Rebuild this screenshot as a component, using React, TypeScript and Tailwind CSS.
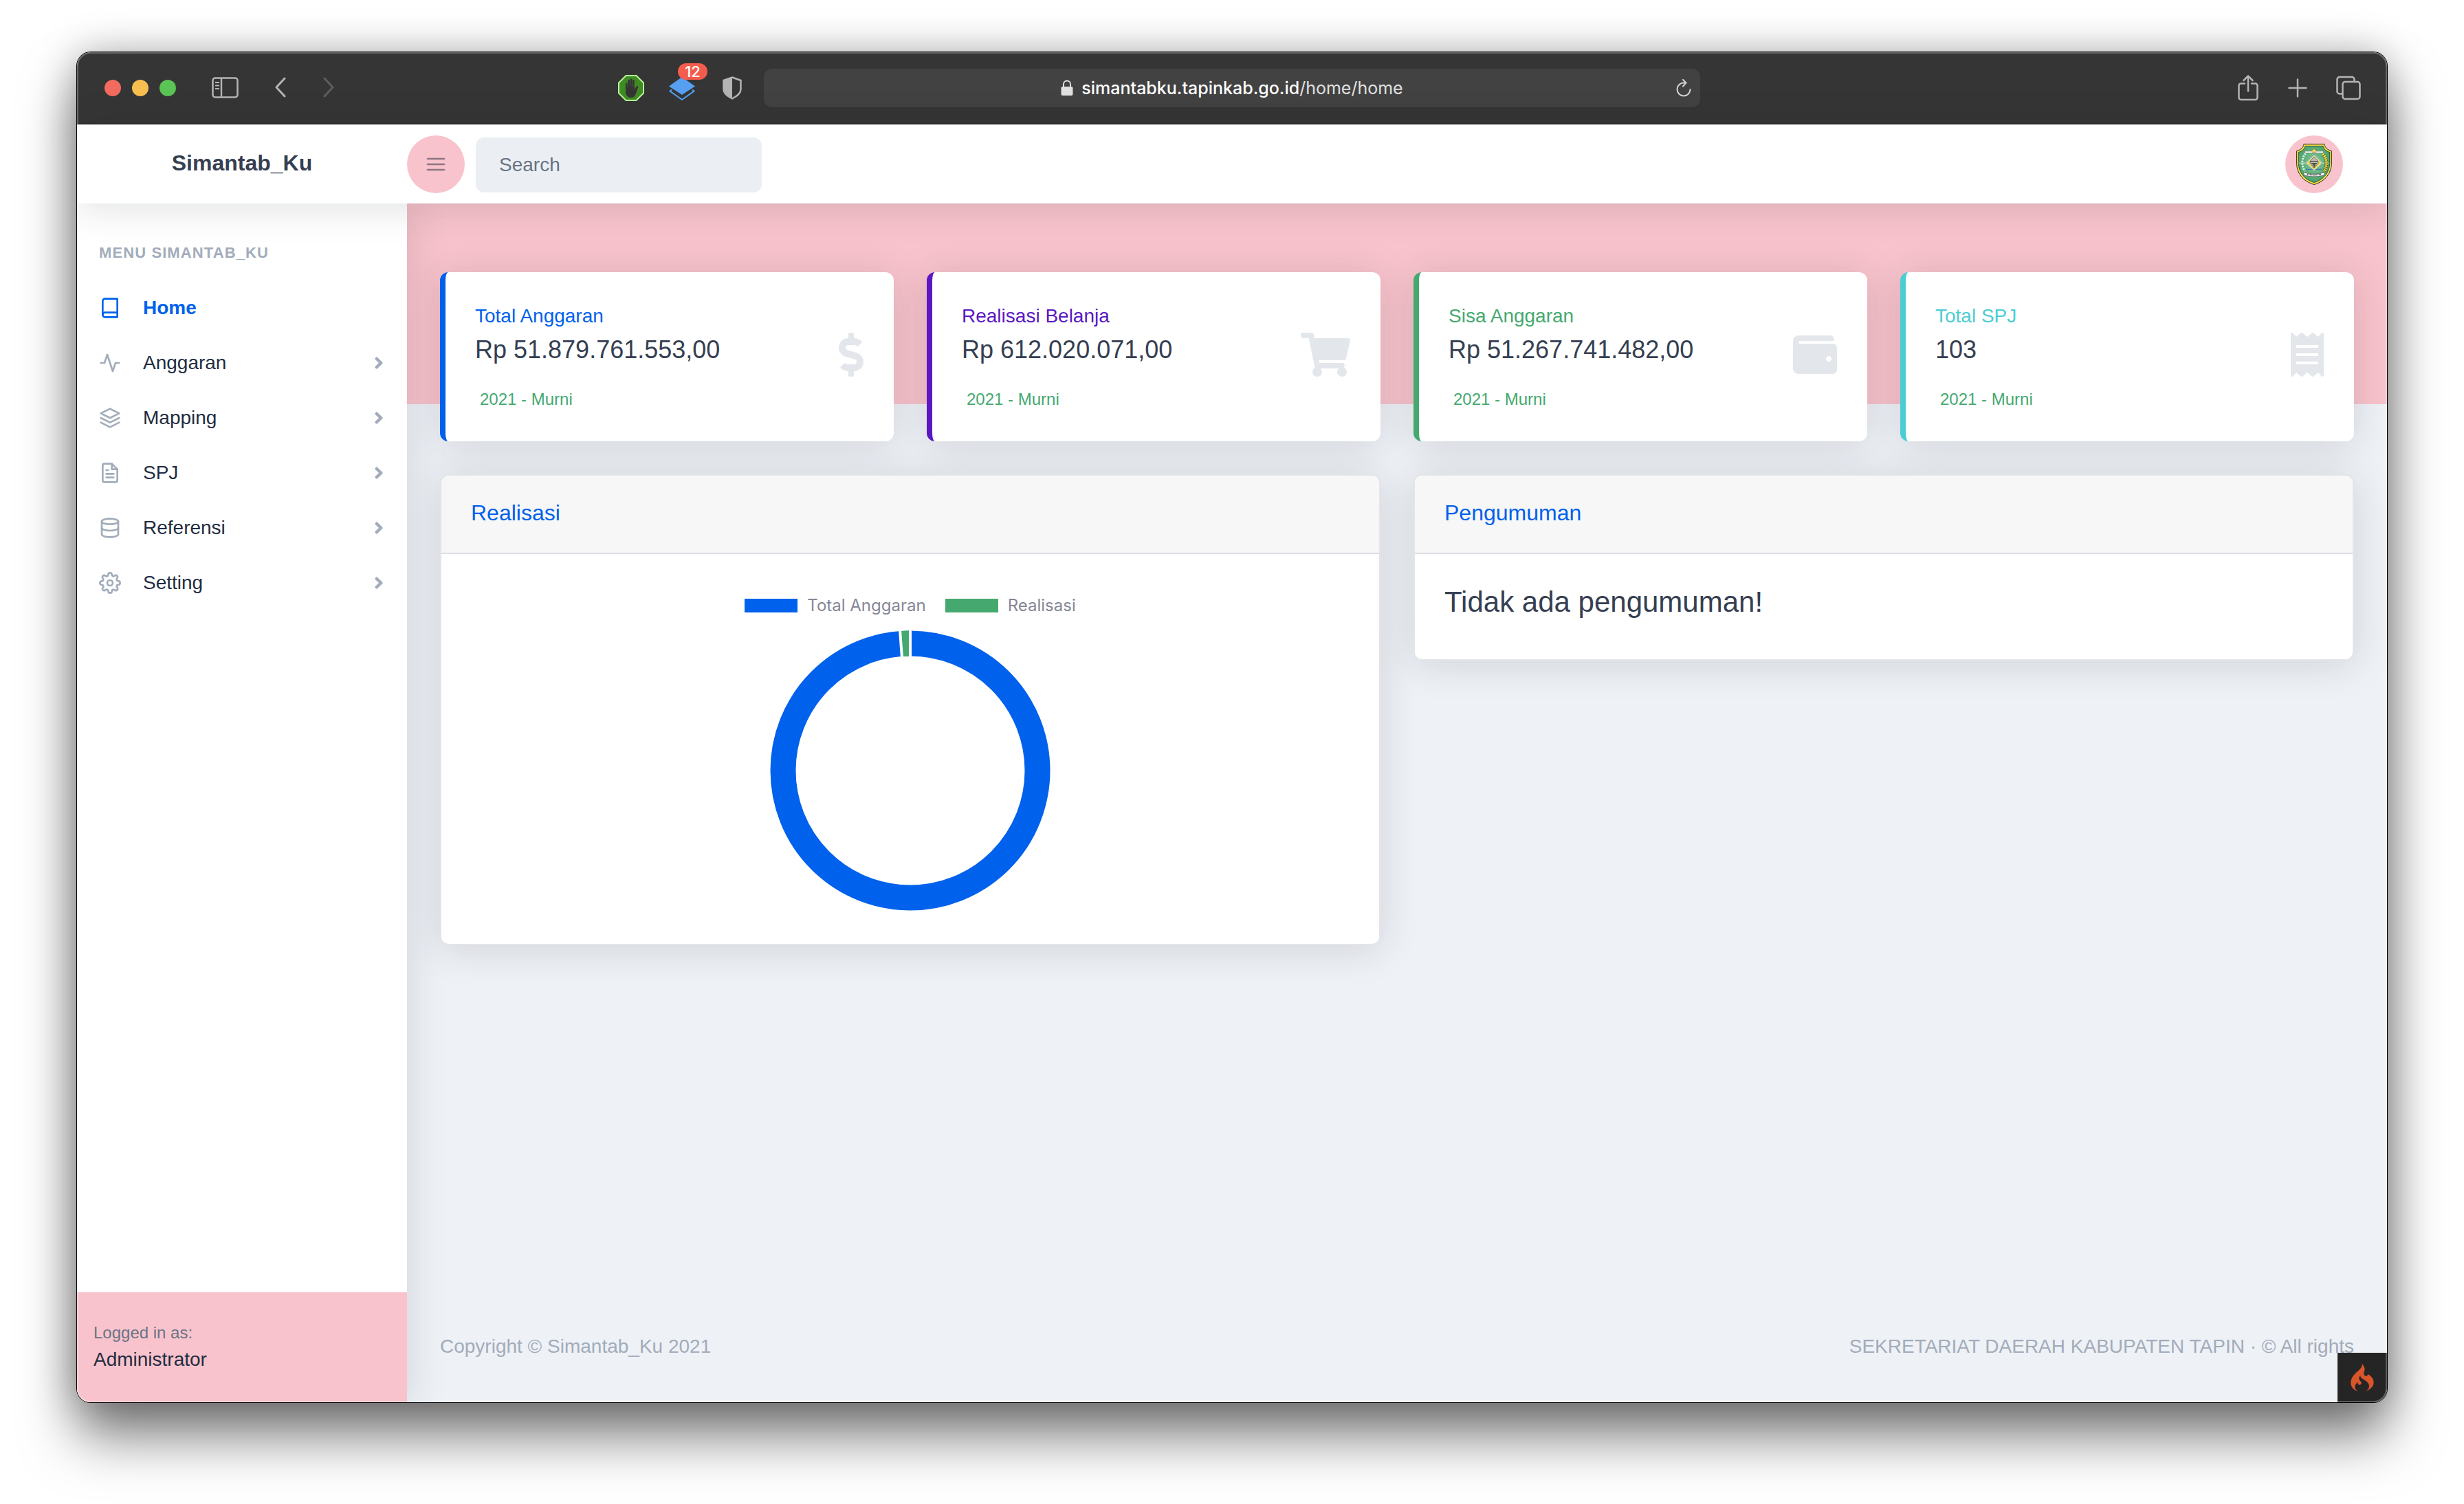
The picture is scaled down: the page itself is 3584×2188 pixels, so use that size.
import React from "react";
import {
  FiActivity,
  FiBook,
  FiDatabase,
  FiFileText,
  FiLayers,
  FiMenu,
  FiSettings,
} from "react-icons/fi";
import {
  FaAngleRight,
  FaDollarSign,
  FaReceipt,
  FaShoppingCart,
  FaWallet,
} from "react-icons/fa";
import { SiCodeigniter } from "react-icons/si";

function BrowserBar() {
  return (
    <div className="grid h-[104px] grid-cols-[1fr_1362px_1fr] items-center bg-[#353535] text-[#b4b4b4]">
      <div className="flex items-center pl-10 pr-8">
        <div className="flex gap-4">
          <button aria-label="Close window" className="size-6 rounded-full bg-[#f26b5f]" />
          <button aria-label="Minimize window" className="size-6 rounded-full bg-[#f8be4f]" />
          <button aria-label="Zoom window" className="size-6 rounded-full bg-[#5ac454]" />
        </div>
        <button aria-label="Show sidebar" className="ml-[52px]">
          <svg className="h-8 w-10" viewBox="0 0 40 32" fill="none" stroke="currentColor" strokeWidth="2.5">
            <rect x="1.5" y="1.5" width="36" height="28" rx="3.5" />
            <path d="M14 1.5v28" />
            <path d="M5 8h6M5 12.500h6M5 17h6" strokeWidth="2" />
          </svg>
        </button>
        <button aria-label="Back" className="ml-[50px]">
          <svg className="h-8 w-5" viewBox="0 0 20 32" fill="none" stroke="currentColor" strokeWidth="3" strokeLinecap="round" strokeLinejoin="round">
            <path d="M16 2L4 15l12 13" />
          </svg>
        </button>
        <button aria-label="Forward" className="ml-[50px] text-[#5e5e5e]">
          <svg className="h-8 w-5" viewBox="0 0 20 32" fill="none" stroke="currentColor" strokeWidth="3" strokeLinecap="round" strokeLinejoin="round">
            <path d="M4 2l12 13L4 28" />
          </svg>
        </button>
        <button aria-label="Content blocker" className="ml-auto">
          <svg className="size-[38px]" viewBox="0 0 38 38">
            <path d="M11.500 1h15L37 11.500v15L26.500 37h-15L1 26.500v-15z" fill="#3f8a23" stroke="#b5f59a" strokeWidth="2" />
            <path
              d="M11 25V13a1.300 1.300 0 0 1 2.600 0v5h.6V8.500a1.400 1.400 0 0 1 2.800 0V17h.6V7a1.400 1.400 0 0 1 2.800 0v10h.6V8.500a1.400 1.400 0 0 1 2.800 0V21l3-4.500c1-1.200 3-.3 2.400 1.300-1.600 4-2.400 8.400-4.300 11.700-2.300 4.500-9.300 4.700-12 .8C11.600 28.600 11 27 11 25z"
              fill="#353535"
            />
          </svg>
        </button>
        <button aria-label="Tab stack, 12 open" className="relative ml-9">
          <svg className="size-[38px]" viewBox="0 0 38 38">
            <path d="M19 3l19 13.500L19 29 0 16.500z" fill="#579ff0" />
            <path d="M4 21.500L1.500 23.500 19 36l17.500-12.500-2.500-2" fill="none" stroke="#579ff0" strokeWidth="2" />
          </svg>
          <span className="absolute -top-[17px] left-[13px] flex h-6 w-[43px] items-center justify-center rounded-full bg-[#f45c4d] font-[Inter,sans-serif] text-[22px] leading-none font-medium text-white">
            12
          </span>
        </button>
        <button aria-label="Privacy report" className="ml-10">
          <svg className="h-[34px] w-7" viewBox="0 0 28 34">
            <path d="M14 1.500L26.500 6v13c0 6-5.500 10-12.500 13.500C7 29 1.500 25 1.500 19V6z" fill="none" stroke="currentColor" strokeWidth="2.500" />
            <path d="M14 1.500v31C7 29 1.500 25 1.500 19V6z" fill="currentColor" />
          </svg>
        </button>
      </div>

      <div className="flex h-14 items-center rounded-xl bg-[#424242] pr-3 pl-9">
        <div className="flex flex-1 items-center justify-center gap-3 font-[Inter,sans-serif] text-[25px] leading-8 text-[#e0e0e0]">
          <svg className="h-6 w-[18px]" viewBox="0 0 18 24" aria-hidden="true">
            <rect x="0.500" y="10" width="17" height="13" rx="2" fill="currentColor" />
            <path d="M4 11V6.500a5 5 0 0 1 10 0V11" fill="none" stroke="currentColor" strokeWidth="2" />
          </svg>
          <span>
            <span className="font-medium text-white">simantabku.tapinkab.go.id</span>/home/home
          </span>
        </div>
        <button aria-label="Reload" className="text-[#d4d4d4]">
          <svg className="h-[26px] w-6" viewBox="0 0 24 26" fill="none" stroke="currentColor" strokeWidth="2" strokeLinecap="round" strokeLinejoin="round">
            <path d="M15 5.500H12A9.500 9.500 0 1 0 21.500 15" />
            <path d="M11 1l4.500 4.500L11 10.500" />
          </svg>
        </button>
      </div>

      <div className="flex items-center justify-end gap-[42px] pr-[38px]">
        <button aria-label="Share">
          <svg className="h-[38px] w-8" viewBox="0 0 32 38" fill="none" stroke="currentColor" strokeWidth="2.500" strokeLinecap="round" strokeLinejoin="round">
            <path d="M11 12.500H5.500a3 3 0 0 0-3 3V33a3 3 0 0 0 3 3h21a3 3 0 0 0 3-3V15.500a3 3 0 0 0-3-3H21" />
            <path d="M16 23.500V2M9.500 8L16 1.500 22.500 8" />
          </svg>
        </button>
        <button aria-label="New tab">
          <svg className="size-7" viewBox="0 0 28 28" fill="none" stroke="currentColor" strokeWidth="2.500" strokeLinecap="round">
            <path d="M14 1.500v25M1.500 14h25" />
          </svg>
        </button>
        <button aria-label="Tab overview">
          <svg className="size-9" viewBox="0 0 36 36" fill="none" stroke="currentColor" strokeWidth="2.500" strokeLinejoin="round">
            <rect x="9.500" y="9" width="25" height="25" rx="3.500" />
            <path d="M9.500 26.500H5A3.500 3.500 0 0 1 1.500 23V5.500A3.500 3.500 0 0 1 5 2h18a3.500 3.500 0 0 1 3.500 3.500V9" />
          </svg>
        </button>
      </div>
    </div>
  );
}

function Emblem() {
  return (
    <svg className="h-[60px] w-[52px]" viewBox="0 0 52 60" aria-hidden="true">
      <defs>
        <radialGradient id="emblem-field" cx="0.5" cy="0.45" r="0.6">
          <stop offset="0" stopColor="#8cc79f" />
          <stop offset="1" stopColor="#3f9f62" />
        </radialGradient>
      </defs>
      <path
        d="M11 .8h30c.5 4.500 4.500 8.700 10.400 9.700V28c0 15-9.400 27-25.400 31.500C10 55 .6 43 .6 28V10.500C6.500 9.500 10.500 5.300 11 .8z"
        fill="#f4e04d"
        stroke="#2b2b20"
        strokeWidth="1"
      />
      <path
        d="M13 3.500h26c1 4.500 4.800 7.800 9.700 9V28c0 13-8.200 24.400-22.700 28.500C11.500 52.400 3.300 41 3.300 28V12.500c4.900-1.200 8.700-4.500 9.700-9z"
        fill="url(#emblem-field)"
        stroke="#2b2b20"
        strokeWidth="0.800"
      />
      <path d="M3.500 28.200h45" stroke="#dfe9e2" strokeWidth="0.800" />
      <path d="M12.500 11h27v2.600h-27z" fill="#fff" stroke="#555" strokeWidth="0.500" />
      <path d="M26 6l1.100 2.900 3.100.1-2.500 1.900.9 3-2.600-1.700-2.600 1.700.9-3-2.500-1.900 3.100-.1z" fill="#f6e24b" stroke="#6b6420" strokeWidth="0.400" />
      <path d="M13.500 14.500C8.500 20 6.500 31 12.500 40" fill="none" stroke="#e9f2ec" strokeWidth="3" strokeDasharray="2 1.800" />
      <path d="M38.500 15C45.500 21 45.500 33 40 40.500" fill="none" stroke="#3c4a1c" strokeWidth="4.600" />
      <path d="M38.500 15C45.500 21 45.500 33 40 40.500" fill="none" stroke="#efdc45" strokeWidth="3.800" strokeDasharray="2.200 .8" />
      <path d="M14 37.300h24" stroke="#2f6fae" strokeWidth="1" />
      <path d="M26 17l11 11-11 10.500L15 28z" fill="#f1dc38" stroke="#fff" strokeWidth="1.200" />
      <path d="M26 17l11 11-11 10.500L15 28z" fill="none" stroke="#444" strokeWidth="0.400" />
      <path d="M26 19l6 6.500v3l-6 7-6-7v-3z" fill="#b9b9b4" stroke="#444" strokeWidth="0.600" />
      <path d="M20 25.500h12M22 28.500h8M23.500 31h5M26 28v7" stroke="#333" strokeWidth="1.100" />
      <path d="M10.500 42l4 .8c7.500 2 15.500 2 23 0l4-.8-1.300 4.200-3 .4c-7.400 1.600-15 1.600-22.400 0l-3-.4z" fill="#fff" stroke="#444" strokeWidth="0.600" />
      <path d="M16 44.600c6.700 1.400 13.300 1.400 20 0" fill="none" stroke="#333" strokeWidth="1.500" strokeDasharray="1.200 .7" />
    </svg>
  );
}

function TopNav() {
  return (
    <header className="relative z-20 flex h-[116px] items-center border-t border-black bg-white shadow-[0_5px_56px_0_rgba(33,40,50,0.15)]">
      <a href="#" className="w-[480px] shrink-0 pb-1 text-center text-[32px] leading-[48px] font-bold text-[#363f52]">
        Simantab_Ku
      </a>
      <button aria-label="Toggle sidebar" className="flex size-[84px] items-center justify-center rounded-full bg-[#f8c3cc] text-[#8d7684]">
        <FiMenu className="size-8" />
      </button>
      <input
        type="search"
        aria-label="Search"
        placeholder="Search"
        className="mt-0.5 ml-4 h-20 w-[416px] rounded-xl bg-[#ebeff4] px-[34px] text-[28px] text-[#363f52] outline-none placeholder:text-[#687281] placeholder:opacity-100"
      />
      <button aria-label="Account" className="mr-16 ml-auto flex size-[84px] items-center justify-center rounded-full bg-[#f8c3cc]">
        <Emblem />
      </button>
    </header>
  );
}

const menu = [
  { label: "Home", icon: FiBook, active: true },
  { label: "Anggaran", icon: FiActivity },
  { label: "Mapping", icon: FiLayers },
  { label: "SPJ", icon: FiFileText },
  { label: "Referensi", icon: FiDatabase },
  { label: "Setting", icon: FiSettings },
];

function SideNav() {
  return (
    <aside className="relative z-10 flex w-[480px] shrink-0 flex-col bg-white shadow-[0_5px_56px_0_rgba(33,40,50,0.15)]">
      <h2 className="mt-14 px-8 text-[22px] leading-8 font-bold tracking-wider text-[#a2acba] uppercase">
        Menu Simantab_Ku
      </h2>
      <nav className="mt-6 flex flex-col">
        {menu.map(({ label, icon: Icon, active }) => (
          <a
            key={label}
            href="#"
            className={
              active
                ? "flex h-20 items-center px-8 text-[28px] font-bold text-[#0061ec]"
                : "flex h-20 items-center px-8 text-[28px] text-[#1f2d41]"
            }
          >
            <Icon className={active ? "size-8" : "size-8 text-[#a2acba]"} />
            <span className="ml-8 leading-[42px]">{label}</span>
            {!active && <FaAngleRight className="ml-auto h-7 w-[18px] text-[#a2acba]" />}
          </a>
        ))}
      </nav>
      <div className="mt-auto flex h-40 flex-col justify-center bg-[#f8c3cc] px-6">
        <div className="text-[24px] leading-9 text-[#6a7485]">Logged in as:</div>
        <div className="text-[28px] leading-[42px] text-[#1f2d41]">Administrator</div>
      </div>
    </aside>
  );
}

const stats = [
  { label: "Total Anggaran", value: "Rp 51.879.761.553,00", icon: FaDollarSign, border: "border-[#0061ec]", text: "text-[#0061ec]", size: "h-16 w-9" },
  { label: "Realisasi Belanja", value: "Rp 612.020.071,00", icon: FaShoppingCart, border: "border-[#5a18c2]", text: "text-[#5a18c2]", size: "h-16 w-[72px]" },
  { label: "Sisa Anggaran", value: "Rp 51.267.741.482,00", icon: FaWallet, border: "border-[#45a96f]", text: "text-[#45a96f]", size: "size-16" },
  { label: "Total SPJ", value: "103", icon: FaReceipt, border: "border-[#4ccdd3]", text: "text-[#4ccdd3]", size: "h-16 w-12" },
];

function StatCards() {
  return (
    <div className="grid grid-cols-4 gap-12">
      {stats.map(({ label, value, icon: Icon, border, text, size }) => (
        <section
          key={label}
          className={`flex items-center justify-between rounded-xl border-l-8 bg-white py-[43px] pr-11 pl-[43px] shadow-[0_5px_56px_0_rgba(33,40,50,0.15)] ${border}`}
        >
          <div>
            <h3 className={`text-[28px] leading-[42px] ${text}`}>{label}</h3>
            <p className="text-[36px] leading-[56px] text-[#363f52]">{value}</p>
            <p className="mt-[26px] pl-[7px] text-[24px] leading-9 text-[#45a96f]">2021 - Murni</p>
          </div>
          <Icon className={`mb-1.5 text-[#e3e7ec] ${size}`} />
        </section>
      ))}
    </div>
  );
}

function Panel({ title, children }: { title: string; children: React.ReactNode }) {
  return (
    <section className="overflow-clip rounded-xl border-2 border-[#e3e5e8] bg-white shadow-[0_5px_56px_0_rgba(33,40,50,0.15)]">
      <h2 className="border-b-2 border-[#dddfe5] bg-[#f7f7f7] px-[43px] pt-[30px] pb-[34px] text-[32px] leading-[48px] text-[#0061ec]">
        {title}
      </h2>
      {children}
    </section>
  );
}

const spent = 612020071;
const budget = 51879761553;

function BudgetDonut() {
  const angle = (2 * Math.PI * spent) / (spent + budget);
  const at = (r: number) => `${204 - r * Math.sin(angle)} ${204 - r * Math.cos(angle)}`;
  return (
    <svg className="size-[408px]" viewBox="0 0 408 408" role="img" aria-label="Realisasi anggaran">
      <circle cx="204" cy="204" r="185" fill="none" stroke="#0061ec" strokeWidth="37" />
      <path d={`M${at(185)}A185 185 0 0 1 204 19`} fill="none" stroke="#45a96f" strokeWidth="37" />
      <path d={`M204 0V40M${at(205)}L${at(164)}`} stroke="#fff" strokeWidth="4" />
    </svg>
  );
}

function Dashboard() {
  return (
    <main className="relative flex min-w-0 flex-1 flex-col bg-[linear-gradient(to_bottom,#f8c3cc_292px,#eef1f6_292px)] px-12 pt-[100px]">
      <StatCards />
      <div className="mt-12 grid grid-cols-2 items-start gap-12">
        <Panel title="Realisasi">
          <div className="flex flex-col items-center pt-[63px] pb-12">
            <div className="flex h-6 items-center font-[Inter,sans-serif] text-[24px] leading-6 text-[#858796]">
              <span className="h-5 w-[77px] bg-[#0061ec]" />
              <span className="ml-3.5">Total Anggaran</span>
              <span className="ml-7 h-5 w-[77px] bg-[#45a96f]" />
              <span className="ml-3.5">Realisasi</span>
            </div>
            <div className="mt-6">
              <BudgetDonut />
            </div>
          </div>
        </Panel>
        <Panel title="Pengumuman">
          <p className="px-[43px] pt-[45px] pb-[58px] text-[42px] leading-[50px] text-[#363f52]">
            Tidak ada pengumuman!
          </p>
        </Panel>
      </div>
      <footer className="mt-auto flex justify-between pb-[60px] text-[28px] leading-[42px] text-[#a2acba]">
        <span>Copyright © Simantab_Ku 2021</span>
        <span>SEKRETARIAT DAERAH KABUPATEN TAPIN · © All rights</span>
      </footer>
      <button aria-label="Debug toolbar" className="absolute right-0 bottom-0 flex size-[72px] items-center justify-center bg-[#252525] text-[#d8552a]">
        <SiCodeigniter className="size-10" />
      </button>
    </main>
  );
}

export default function App() {
  return (
    <div className="flex min-h-screen flex-col bg-white px-28 pt-[76px] pb-[148px] font-['Liberation_Sans',Arial,sans-serif]">
      <div className="relative flex flex-1 flex-col rounded-[20px] shadow-[0_0_0_1px_#000,0_50px_80px_rgba(0,0,0,0.5),0_0_60px_rgba(0,0,0,0.28)]">
        <div className="flex flex-1 flex-col overflow-clip rounded-[20px]">
          <BrowserBar />
          <TopNav />
          <div className="flex flex-1">
            <SideNav />
            <Dashboard />
          </div>
        </div>
        <div className="pointer-events-none absolute inset-0 z-30 rounded-[20px] border-2 border-white/25" />
      </div>
    </div>
  );
}
